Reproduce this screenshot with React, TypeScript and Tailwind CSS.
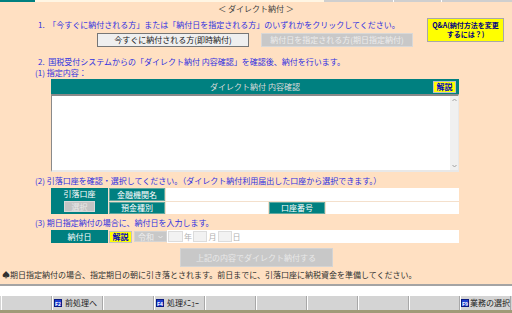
import React from "react";

const font = { fontFamily: '"Noto Sans CJK JP", "Noto Sans", sans-serif' };

function FKey({ label }: { label: string }) {
  return (
    <span className="inline-flex items-center justify-center w-[8px] h-[8px] bg-[#1f3fd0] border border-[#0a1a80] text-white text-[5px] font-bold leading-none">
      {label}
    </span>
  );
}

function KaisetsuBtn({ w }: { w: string }) {
  return (
    <div className={`${w} h-[12px] bg-[#ffff00] border border-[#c0c0c0] flex items-center justify-center text-[8px] font-bold text-[#0000c0] leading-none`}>
      解説
    </div>
  );
}

export default function App() {
  const cells = Array.from({ length: 10 });
  return (
    <div className="w-[512px] h-[313px] bg-[#ffe0c2] flex flex-col overflow-hidden text-[8px]" style={font}>
      <div className="h-[2px] flex shrink-0">
        <div className="w-[35px] bg-[#008080]" />
        <div className="w-[289px] bg-[#fff6e4]" />
        <div className="flex-1 bg-[#cfcfcf] flex">
          <div className="w-[70px] border-r border-[#ffffff]" />
          <div className="w-[48px] border-r border-[#ffffff]" />
          <div className="flex-1" />
        </div>
      </div>

      <div className="h-[14px] flex items-center justify-center text-[#404040] leading-none whitespace-nowrap">
        ＜ ダイレクト納付 ＞
      </div>

      <div className="h-[32px] flex shrink-0">
        <div className="flex-1 flex flex-col pl-[38px]">
          <div className="mt-[4px] h-[10px] leading-[10px] text-[#3030e0] whitespace-nowrap">
            1.&nbsp;&nbsp;「今すぐに納付される方」または「納付日を指定される方」のいずれかをクリックしてください。
          </div>
          <div className="mt-[3px] ml-[59px] flex gap-[12px]">
            <div className="w-[152px] h-[14px] bg-[#efefef] border border-[#767676] flex items-center justify-center text-[#202020] leading-none whitespace-nowrap">
              今すぐに納付される方(即時納付)
            </div>
            <div className="w-[152px] h-[14px] bg-[#c8c8c8] border border-[#d8d8d8] flex items-center justify-center text-[#ececec] leading-none whitespace-nowrap">
              納付日を指定される方(期日指定納付)
            </div>
          </div>
        </div>
        <div className="mt-[2px] mr-[8px] w-[77px] h-[24px] bg-[#ffff00] border border-[#a8a8a8] flex flex-col items-center justify-center text-[#000080] text-[7px] font-bold leading-[9px] whitespace-nowrap">
          <div>Q&amp;A(納付方法を変更</div>
          <div>するには？)</div>
        </div>
      </div>

      <div className="mt-[9px] h-[10px] leading-[10px] pl-[38px] text-[#3030e0] whitespace-nowrap">
        2.&nbsp;&nbsp;国税受付システムからの「ダイレクト納付 内容確認」を確認後、納付を行います。
      </div>
      <div className="mt-[1px] h-[10px] leading-[10px] pl-[35px] text-[#3030e0] whitespace-nowrap">
        (1)&nbsp;指定内容：
      </div>

      <div className="mt-[1px] ml-[51px] w-[408px] h-[93px] flex flex-col shrink-0">
        <div className="h-[15px] bg-[#008080] grid grid-cols-[1fr_auto_1fr] items-center">
          <div />
          <div className="text-[#dcdcdc] leading-none whitespace-nowrap">ダイレクト納付 内容確認</div>
          <div className="justify-self-end mr-[3px]">
            <KaisetsuBtn w="w-[23px]" />
          </div>
        </div>
        <div className="flex-1 bg-white border-l border-t-2 border-[#8a8a8a] border-b-2 border-b-[#e8e8e8] border-r border-r-[#e8e8e8] flex justify-end">
          <div className="w-[8px] bg-[#f0f0f0] flex flex-col justify-between items-center py-[2px]">
            <svg width="5" height="4" viewBox="0 0 5 4"><path d="M0.5 3 L2.5 1 L4.5 3" stroke="#a0a0a0" fill="none" strokeWidth="1" /></svg>
            <svg width="5" height="4" viewBox="0 0 5 4"><path d="M0.5 1 L2.5 3 L4.5 1" stroke="#a0a0a0" fill="none" strokeWidth="1" /></svg>
          </div>
        </div>
      </div>

      <div className="mt-[4px] h-[10px] leading-[10px] pl-[35px] text-[#3030e0] whitespace-nowrap">
        (2)&nbsp;引落口座を確認・選択してください。（ダイレクト納付利用届出した口座から選択できます。）
      </div>
      <div className="mt-[2px] ml-[51px] w-[408px] h-[26px] grid grid-cols-[57px_56px_102px_56px_1fr] grid-rows-[13px_12px] gap-px bg-[#f4e0cc] shrink-0">
        <div className="row-span-2 bg-[#008080] flex flex-col items-center text-white leading-none pt-[2px]">
          <div>引落口座</div>
          <div className="mt-[3px] w-[31px] h-[11px] bg-[#c4c4c4] border border-[#d8d8d8] flex items-center justify-center text-[#e8e8e8]">選択</div>
        </div>
        <div className="bg-[#008080] border border-[#5fa8a0] text-white flex items-center justify-center leading-none">金融機関名</div>
        <div className="col-span-3 bg-white" />
        <div className="bg-[#008080] border border-[#5fa8a0] text-white flex items-center justify-center leading-none">預金種別</div>
        <div className="bg-white" />
        <div className="bg-[#008080] border border-[#5fa8a0] text-white flex items-center justify-center leading-none">口座番号</div>
        <div className="bg-white" />
      </div>

      <div className="mt-[4px] h-[10px] leading-[10px] pl-[35px] text-[#3030e0] whitespace-nowrap">
        (3)&nbsp;期日指定納付の場合に、納付日を入力します。
      </div>
      <div className="mt-[2px] ml-[51px] w-[408px] h-[13px] flex items-center shrink-0">
        <div className="w-[57px] h-[13px] bg-[#008080] text-white flex items-center justify-center leading-none">納付日</div>
        <div className="ml-px">
          <KaisetsuBtn w="w-[23px]" />
        </div>
        <div className="ml-[2px] w-[33px] h-[11px] bg-[#c8c8c8] border border-[#d4d4d4] flex items-center justify-between px-[3px] text-[#eeeeee] leading-none">
          <span>令和</span>
          <svg width="5" height="4" viewBox="0 0 5 4"><path d="M0.5 1 L2.5 3 L4.5 1" stroke="#e8e8e8" fill="none" strokeWidth="1" /></svg>
        </div>
        <div className="flex-1 h-[13px] bg-white flex items-center pl-[1px] text-[#b0b0b0] leading-none">
          <div className="w-[15px] h-[11px] bg-[#f2f2f2] border border-[#dcdcdc]" />
          <span className="w-[10px] text-center">年</span>
          <div className="w-[14px] h-[11px] bg-[#f2f2f2] border border-[#dcdcdc]" />
          <span className="w-[11px] text-center">月</span>
          <div className="w-[14px] h-[11px] bg-[#f2f2f2] border border-[#dcdcdc]" />
          <span className="w-[9px] text-center">日</span>
        </div>
      </div>

      <div className="mt-[5px] mx-auto w-[153px] h-[19px] bg-[#c8c8c8] border border-[#d4d4d4] flex items-center justify-center text-[#e8e8e8] leading-none whitespace-nowrap shrink-0">
        上記の内容でダイレクト納付する
      </div>

      <div className="mt-[3px] h-[10px] leading-[10px] pl-[2px] text-[#303030] whitespace-nowrap">
        ♠期日指定納付の場合、指定期日の朝に引き落とされます。前日までに、引落口座に納税資金を準備してください。
      </div>

      <div className="flex-1" />

      <div className="h-[2px] bg-[#a4a4a4] shrink-0" />
      <div className="h-[10px] bg-white shrink-0" />
      <div className="h-[14px] bg-[#d4d4d4] flex shrink-0 pl-px">
        {cells.map((_, i) => (
          <div key={i} className="w-[51px] h-full border-l border-white border-r border-r-[#a8a8a8] flex items-center text-[#202020] leading-none whitespace-nowrap">
            {i === 1 && (
              <div className="flex items-center ml-[1px] gap-[3px]">
                <FKey label="F2" />
                <span>前処理へ</span>
              </div>
            )}
            {i === 3 && (
              <div className="flex items-center ml-[1px] gap-[3px]">
                <FKey label="F4" />
                <span>処理ﾒﾆｭｰ</span>
              </div>
            )}
            {i === 9 && (
              <div className="flex items-center gap-[1px]">
                <FKey label="F9" />
                <span>業務の選択</span>
              </div>
            )}
          </div>
        ))}
      </div>
      <div className="h-[3px] bg-[#a09a78] shrink-0" />
    </div>
  );
}
